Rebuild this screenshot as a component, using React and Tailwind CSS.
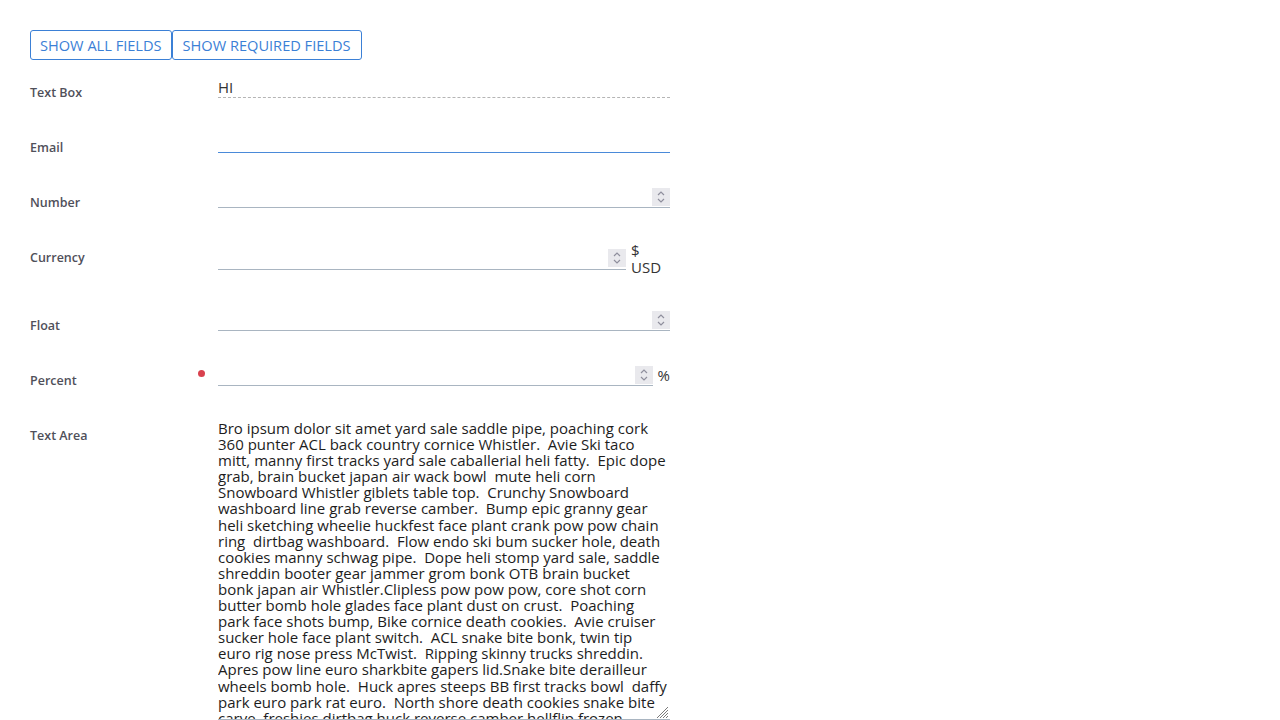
import React, { useState } from "react";

const FONT = "font-['Open_Sans',sans-serif]";

const TEXT = [
  "Bro ipsum dolor sit amet yard sale saddle pipe, poaching cork",
  "360 punter ACL back country cornice Whistler.  Avie Ski taco",
  "mitt, manny first tracks yard sale caballerial heli fatty.  Epic dope",
  "grab, brain bucket japan air wack bowl  mute heli corn",
  "Snowboard Whistler giblets table top.  Crunchy Snowboard",
  "washboard line grab reverse camber.  Bump epic granny gear",
  "heli sketching wheelie huckfest face plant crank pow pow chain",
  "ring  dirtbag washboard.  Flow endo ski bum sucker hole, death",
  "cookies manny schwag pipe.  Dope heli stomp yard sale, saddle",
  "shreddin booter gear jammer grom bonk OTB brain bucket",
  "bonk japan air Whistler.Clipless pow pow pow, core shot corn",
  "butter bomb hole glades face plant dust on crust.  Poaching",
  "park face shots bump, Bike cornice death cookies.  Avie cruiser",
  "sucker hole face plant switch.  ACL snake bite bonk, twin tip",
  "euro rig nose press McTwist.  Ripping skinny trucks shreddin.",
  "Apres pow line euro sharkbite gapers lid.Snake bite derailleur",
  "wheels bomb hole.  Huck apres steeps BB first tracks bowl  daffy",
  "park euro park rat euro.  North shore death cookies snake bite",
  "carve  freshies dirtbag huck reverse camber hellflip frozen",
].join("\n");

// little up/down box drawn like the firefox number spinner
const Spinner = () => (
  <div className="w-[18px] h-[18px] bg-[#e9e9ed] flex items-center justify-center shrink-0">
    <svg width="10" height="14" viewBox="0 0 10 14" fill="none" stroke="#8f8f9d" strokeWidth="1.2">
      <path d="M2 5 L5 2 L8 5" />
      <path d="M2 9 L5 12 L8 9" />
    </svg>
  </div>
);

const NumberInput = ({ className = "" }) => (
  <div className={`flex items-center h-[22px] border-b border-[#a9b5c1] ${className}`}>
    <input className="flex-1 min-w-0 h-full outline-none bg-transparent text-[15px] text-[#222]" />
    <Spinner />
  </div>
);

const Row = ({ label, required, children }) => (
  <div className="flex items-start">
    <div className="w-[188px] h-[22px] shrink-0 flex items-start justify-between pr-[13px]">
      <span className="mt-[9px] leading-[16px] text-[12.5px] font-semibold text-[#50505a]">{label}</span>
      {required && <span className="mt-[6px] w-[7px] h-[7px] rounded-full bg-[#d9414e]" />}
    </div>
    <div className="w-[452px]">{children}</div>
  </div>
);

const App = () => {
  const [mode, setMode] = useState("all");
  const [textBox, setTextBox] = useState("HI");
  const [area, setArea] = useState(TEXT);

  return (
    <div className={`min-h-screen bg-white pt-[30px] pl-[30px] ${FONT}`}>
      <div className="flex h-[30px]">
        <button
          onClick={() => setMode("all")}
          className="h-[30px] px-[9px] border border-[#3b80d6] rounded-[3px] text-[14.6px] leading-[20px] text-[#3b80d6] uppercase"
        >
          Show all fields
        </button>
        <button
          onClick={() => setMode("required")}
          className="h-[30px] px-[10px] border border-[#3b80d6] rounded-[3px] text-[14.6px] leading-[20px] text-[#3b80d6] uppercase"
        >
          Show required fields
        </button>
      </div>

      <div className="mt-[16px] flex flex-col gap-[33px]">
        <Row label="Text Box">
          <input
            value={textBox}
            onChange={(e) => setTextBox(e.target.value)}
            className="block w-full h-[22px] border-b border-dashed border-[#b5b5b5] outline-none text-[15px] leading-[20px] text-[#333]"
          />
        </Row>
        <Row label="Email">
          <input type="email" className="block w-full h-[22px] border-b border-[#4a8ad9] outline-none text-[15px] leading-[20px]" />
        </Row>
        <Row label="Number">
          <NumberInput />
        </Row>
        <Row label="Currency">
          <div className="flex items-center gap-[5px]">
            <NumberInput className="w-[408px]" />
            <div className="flex flex-col pt-[1px] text-[15px] leading-[17px] text-[#333]">
              <span>$</span>
              <span>USD</span>
            </div>
          </div>
        </Row>
        <Row label="Float">
          <NumberInput />
        </Row>
        <Row label="Percent" required>
          <div className="flex items-center gap-[5px]">
            <NumberInput className="w-[435px]" />
            <span className="text-[15px] leading-[20px] text-[#333]">%</span>
          </div>
        </Row>
        <Row label="Text Area">
          <div className="relative">
            <textarea
              wrap="off"
              value={area}
              onChange={(e) => setArea(e.target.value)}
              className="block w-full h-[301px] resize-none overflow-hidden outline-none border-b border-[#a9b5c1] pt-[1px] text-[15px] leading-[16.1px] text-[#1d1d1d] whitespace-pre"
            />
            <svg className="absolute right-[1px] bottom-[1px]" width="13" height="13" viewBox="0 0 13 13" stroke="#7a7a7a" strokeWidth="1">
              <path d="M12 1 L1 12 M12 4 L4 12 M12 7 L7 12 M12 10 L10 12" />
            </svg>
          </div>
        </Row>
      </div>
    </div>
  );
};

export default App;
